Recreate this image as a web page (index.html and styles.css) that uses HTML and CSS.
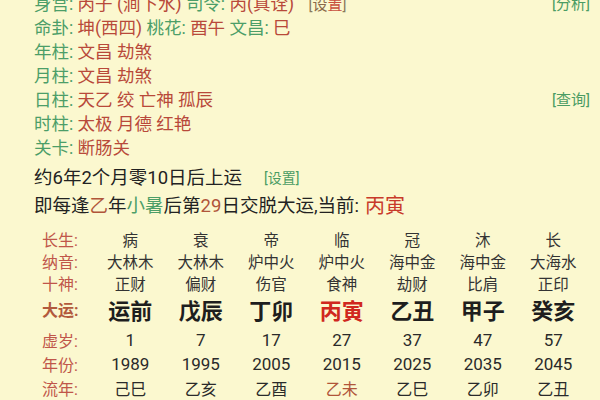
FILE: index.html
```html
<!DOCTYPE html>
<html lang="zh">
<head>
<meta charset="utf-8">
<link rel="stylesheet" href="styles.css">
</head>
<body>
<div class="page">
  <div class="info">
    <div class="line">
      <span><span class="k">身宫:</span> <span class="v">丙子 (涧下水)</span> <span class="k">司令:</span> <span class="v">丙(真诠)</span> <span class="set1"><span class="br">[</span>设<span class="red">置</span><span class="br">]</span></span></span>
      <span class="link">[分析]</span>
    </div>
    <div class="line"><span><span class="k">命卦:</span> <span class="v">坤(西四)</span> <span class="k">桃花:</span> <span class="v">酉午</span> <span class="k">文昌:</span> <span class="v">巳</span></span></div>
    <div class="line"><span><span class="k">年柱:</span> <span class="v">文昌 劫煞</span></span></div>
    <div class="line"><span><span class="k">月柱:</span> <span class="v">文昌 劫煞</span></span></div>
    <div class="line">
      <span><span class="k">日柱:</span> <span class="v">天乙 绞 亡神 孤辰</span></span>
      <span class="link">[查询]</span>
    </div>
    <div class="line"><span><span class="k">时柱:</span> <span class="v">太极 月德 红艳</span></span></div>
    <div class="line"><span><span class="k">关卡:</span> <span class="v">断肠关</span></span></div>
  </div>
  <div class="yun">
    <div class="yline"><span>约6年2个月零10日后上运</span><span class="link small">[设置]</span></div>
    <div class="yline"><span>即每逢<span class="bn">乙</span>年<span class="gn">小暑</span>后第<span class="bn">29</span>日交脱大运,当前:</span><span class="cur">丙寅</span></div>
  </div>
  <div class="table">
    <div class="row r-sm">
      <span class="lab">长生:</span><span>病</span><span>衰</span><span>帝</span><span>临</span><span>冠</span><span>沐</span><span>长</span>
    </div>
    <div class="row r-sm">
      <span class="lab">纳音:</span><span>大林木</span><span>大林木</span><span>炉中火</span><span>炉中火</span><span>海中金</span><span>海中金</span><span>大海水</span>
    </div>
    <div class="row r-sm">
      <span class="lab">十神:</span><span>正财</span><span>偏财</span><span>伤官</span><span>食神</span><span>劫财</span><span>比肩</span><span>正印</span>
    </div>
    <div class="row r-big">
      <span class="lab lab-b">大运:</span><span>运前</span><span>戊辰</span><span>丁卯</span><span class="hot">丙寅</span><span>乙丑</span><span>甲子</span><span>癸亥</span>
    </div>
    <div class="row r-num">
      <span class="lab">虚岁:</span><span>1</span><span>7</span><span>17</span><span>27</span><span>37</span><span>47</span><span>57</span>
    </div>
    <div class="row r-num">
      <span class="lab">年份:</span><span>1989</span><span>1995</span><span>2005</span><span>2015</span><span>2025</span><span>2035</span><span>2045</span>
    </div>
    <div class="row r-ln">
      <span class="lab">流年:</span><span>己巳</span><span>乙亥</span><span>乙酉</span><span class="bn">乙未</span><span>乙巳</span><span>乙卯</span><span>乙丑</span>
    </div>
  </div>
</div>
</body>
</html>
```
FILE: styles.css
```css
html, body {
  margin: 0;
  padding: 0;
  background: #fbf8cf;
}
body {
  width: 600px;
  height: 400px;
  overflow: hidden;
  font-family: Roboto, "Noto Sans CJK SC", sans-serif;
  color: #2a2a2a;
}
.page {
  margin-top: -8px;
}
.info {
  padding-left: 34px;
  padding-right: 10px;
}
.line {
  display: flex;
  justify-content: space-between;
  align-items: center;
  height: 24px;
  font-size: 17.5px;
  line-height: 24px;
  white-space: pre;
}
.k { color: #4c9e68; }
.v { color: #b8493a; }
.link {
  color: #4a9c63;
  font-size: 15px;
}
.set1 {
  font-size: 15px;
  color: #8a6a4a;
  margin-left: 10px;
}
.set1 .br { color: #8a7a5c; }
.set1 .red { color: #c8503e; }
.yun {
  padding-left: 34px;
  margin-top: 4px;
}
.yline {
  height: 28px;
  line-height: 28px;
  font-size: 18.5px;
  color: #222;
  display: flex;
  align-items: center;
}
.yline .small {
  font-size: 14px;
  margin-left: 22px;
}
.bn { color: #b0553a; }
.gn { color: #4c9e68; }
.cur {
  color: #c83a2a;
  font-size: 20px;
  margin-left: 6px;
}
.table {
  margin-top: 7px;
  padding-left: 42px;
}
.row {
  display: grid;
  grid-template-columns: 53px repeat(7, 70.5px);
  align-items: center;
  justify-items: center;
  font-size: 15.5px;
  color: #333;
}
.row .lab {
  justify-self: start;
  color: #c0564a;
  font-size: 16px;
}
.row .lab-b { color: #b25a3c; }
.r-sm { height: 22px; }
.r-big {
  height: 35px;
  padding-bottom: 6px;
  box-sizing: border-box;
  font-size: 22px;
  font-weight: bold;
  color: #1e1e1e;
}
.r-big .hot { color: #d0281e; }
.r-num {
  height: 24px;
  font-size: 17px;
  color: #2a2a2a;
}
.r-ln {
  height: 24px;
  font-size: 16px;
  color: #2a2a2a;
}
.r-ln .bn { color: #b0553a; }
```
